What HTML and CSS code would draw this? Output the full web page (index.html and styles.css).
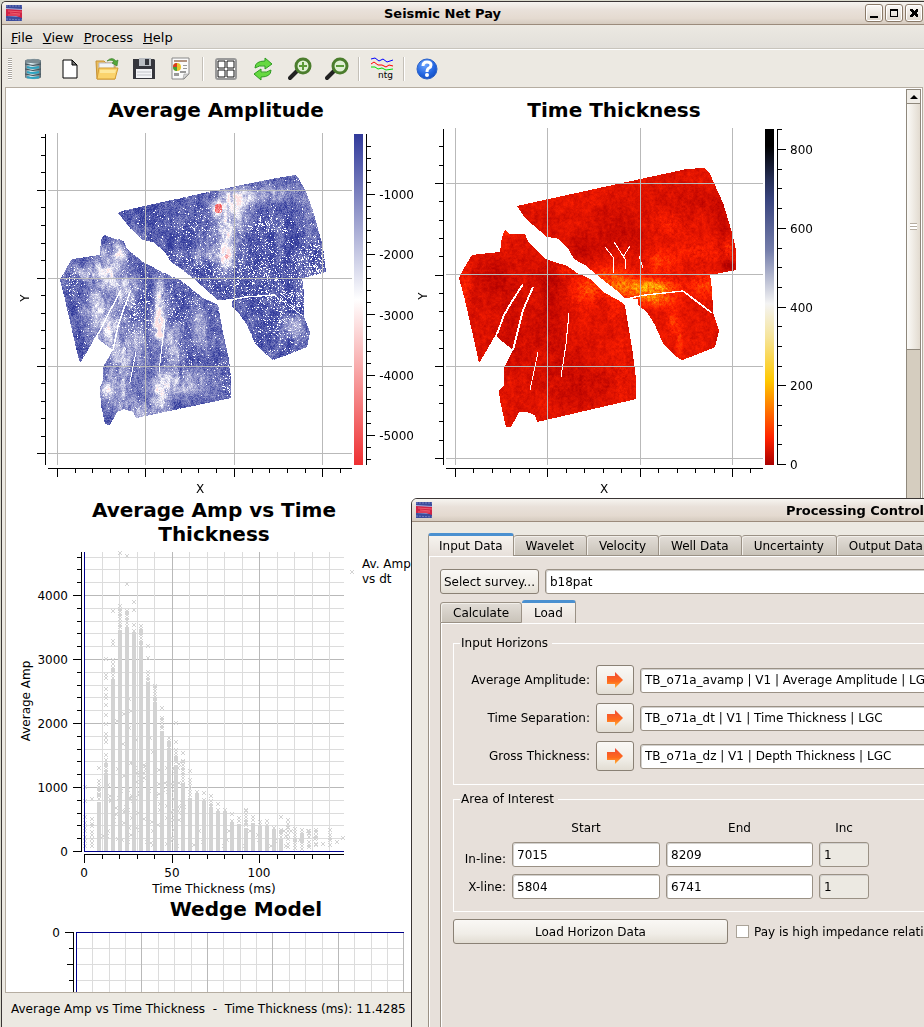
FILE: index.html
```html
<!DOCTYPE html>
<html lang="en">
<head>
<meta charset="utf-8">
<title>Seismic Net Pay</title>
<link rel="stylesheet" href="styles.css">
</head>
<body>
<svg class="defs" aria-hidden="true">
  <defs>
    <symbol id="logo" viewBox="0 0 16 16">
      <rect width="16" height="16" fill="#3b4c9c"/>
      <path d="M0 3l16 1v8L0 11z" fill="#a9aede"/>
      <path d="M0 4l16 1v8l-6-2-10 0z" fill="#cf2345"/>
      <path d="M2 6l14 1M4 8l10 1M2 10l12 0" stroke="#ee5d6c" fill="none"/>
      <path d="M0 1h16M0 14l16 1" stroke="#7480c0" stroke-dasharray="2 1" fill="none"/>
    </symbol>
    <symbol id="arrow" viewBox="0 0 18 18">
      <linearGradient id="og" x1="0" y1="0" x2="0" y2="1"><stop offset="0" stop-color="#ef4a35"/><stop offset=".6" stop-color="#ff6a1c"/><stop offset="1" stop-color="#ffb43a"/></linearGradient>
      <path d="M1 5h8V1l8 8-8 8v-4H1z" fill="url(#og)"/>
    </symbol>
  </defs>
</svg>
<main class="window">
  <header class="titlebar">
    <svg class="logo" aria-hidden="true"><use href="#logo"/></svg>
    <h1>Seismic Net Pay</h1>
    <div class="controls">
      <button aria-label="Minimize"><svg viewBox="0 0 16 16"><path d="M4 11h8v2H4z"/></svg></button>
      <button aria-label="Maximize"><svg viewBox="0 0 16 16"><path d="M4 4h8v8H4zM5 6v5h6V6z" fill-rule="evenodd"/></svg></button>
      <button aria-label="Close"><svg viewBox="0 0 16 16"><path d="M4 4h2l2 2 2-2h2v2l-2 2 2 2v2h-2l-2-2-2 2H4v-2l2-2-2-2z"/></svg></button>
    </div>
  </header>
  <nav class="menubar">
    <button><u>F</u>ile</button><button><u>V</u>iew</button><button><u>P</u>rocess</button><button><u>H</u>elp</button>
  </nav>
  <div class="toolbar">
    <span class="handle"></span>
    <button aria-label="Database"><svg viewBox="0 0 24 24">
      <linearGradient id="db" x1="0" x2="1"><stop offset="0" stop-color="#5d6d75"/><stop offset=".35" stop-color="#e2f3f8"/><stop offset="1" stop-color="#56666e"/></linearGradient>
      <path d="M4 4c0-3 16-3 16 0v16c0 3-16 3-16 0z" fill="url(#db)"/><ellipse cx="12" cy="4" rx="8" ry="2" fill="#7b8b92"/>
      <path d="M4 7q8 3 16 0M4 12q8 3 16 0M4 17q8 3 16 0" fill="none" stroke="#43525a"/><path d="M6 10q6 2 12 0M6 15q6 2 12 0M6 20q6 2 12 0" fill="none" stroke="#2fa3c0" stroke-width="2"/></svg></button>
    <button aria-label="New"><svg viewBox="0 0 24 24"><path d="M5 3h9l5 5v13H5z" fill="#fff" stroke="#000"/><path d="M14 3v5h5z" fill="#777" stroke="#000"/></svg></button>
    <button aria-label="Open"><svg viewBox="0 0 24 24">
      <path d="M1 4h8l2 2h9v16H2z" fill="#e8bd5d" stroke="#c79234"/><path d="M4 6h15v9H4z" fill="#f2f5f5" stroke="#bbc"/><path d="M4 11h19l-3 11H2z" fill="#fad36c" stroke="#d49c32"/><path d="M5 13h16l-1 3H5z" fill="#fde79b"/>
      <path d="M12 4q5-5 9 0l2-1-1 6-5-3 2-1q-2-3-7-1z" fill="#54a83a" stroke="#347a25" stroke-width=".6"/></svg></button>
    <button aria-label="Save"><svg viewBox="0 0 24 24"><path d="M1 2h21l1 1v19H1z" fill="#35363c"/><path d="M7 1h12v8H7z" fill="#b9bdc2"/><path d="M13 2h4v6h-4z" fill="#33353b"/><path d="M4 12h16v9H4z" fill="#f3f4f6"/><path d="M5 15h14M5 18h14" stroke="#c3c5ca"/></svg></button>
    <button aria-label="Report"><svg viewBox="0 0 24 24"><path d="M3 1h17v16l-5 5H3z" fill="#fafafa" stroke="#888"/><path d="M20 17l-6 5 1-5z" fill="#d5d5d5" stroke="#888" stroke-width=".5"/><path d="M5 4h13" stroke="#b29380" stroke-width="2"/><circle cx="8" cy="10" r="4" fill="#e8c42c"/><path d="M8 10V6a4 4 0 0 0-4 4z" fill="#d73a20"/><path d="M8 10H4a4 4 0 0 0 4 4z" fill="#43a035"/><path d="M14 8h4v1h-4zM14 11h4v1h-4zM5 16h5v3H5zM11 14h6v2h-6z" fill="#999"/></svg></button>
    <span class="sep"></span>
    <button aria-label="Tile windows"><svg viewBox="0 0 24 24"><rect x="2" y="2" width="20" height="20" rx="2" fill="#fff" stroke="#999" stroke-width="2"/><path d="M4 4h7v7H4zM13 4h7v7h-7zM4 13h7v7H4zM13 13h7v7h-7z" fill="#fff" stroke="#111"/></svg></button>
    <button aria-label="Refresh"><svg viewBox="0 0 24 24"><g fill="#66d940" stroke="#2f9a22"><path d="M4 11q0-7 10-7V1l7 6-7 5V9q-6-1-10 2z"/><path d="M20 13q0 7-10 7v3l-7-6 7-5v3q6 1 10-2z"/></g></svg></button>
    <button aria-label="Zoom in"><svg viewBox="0 0 24 24"><path d="M10 13l-8 8" stroke="#222" stroke-width="4" stroke-linecap="round"/><circle cx="15" cy="9" r="7" fill="#dff0d4" stroke="#4b7d2d" stroke-width="3"/><path d="M11 9h8M15 5v8" stroke="#5b9b38" stroke-width="2"/></svg></button>
    <button aria-label="Zoom out"><svg viewBox="0 0 24 24"><path d="M10 13l-8 8" stroke="#222" stroke-width="4" stroke-linecap="round"/><circle cx="15" cy="9" r="7" fill="#dff0d4" stroke="#4b7d2d" stroke-width="3"/><path d="M11 9h8" stroke="#5b9b38" stroke-width="2"/></svg></button>
    <span class="sep"></span>
    <button aria-label="Net to gross"><svg viewBox="0 0 24 24"><g fill="none"><path d="M1 2l4-1 4 3 4-2 4 3 6-2" stroke="#00f"/><path d="M1 7l3-2 4 3 4 0 4 2 3-2 4 1" stroke="#f00"/><path d="M1 10l4 0 3 2 4-1 4 2 7-1" stroke="#0d0"/></g><text x="8" y="21" class="ntg">ntg</text></svg></button>
    <span class="sep"></span>
    <button aria-label="Help"><svg viewBox="0 0 24 24"><radialGradient id="hg" cx=".4" cy=".3" r=".8"><stop offset="0" stop-color="#6fa6ff"/><stop offset=".6" stop-color="#2265e0"/><stop offset="1" stop-color="#1147b5"/></radialGradient><circle cx="12" cy="12" r="10" fill="url(#hg)" stroke="#2a62c9"/><path d="M8 9q0-4 4-4t4 3q0 2-2 3t-2 4" fill="none" stroke="#fff" stroke-width="3"/><circle cx="12" cy="18" r="2" fill="#fff"/></svg></button>
  </div>
  <section class="workspace">
    <div class="plots">
      <figure class="plot amp"><h2>Average Amplitude</h2>
        <div class="chart"><canvas id="ampMap" width="411" height="376"></canvas>
        <svg id="amp" width="411" height="376" viewBox="6 122 411 376">
          <defs><linearGradient id="ampScale" x1="0" y1="0" x2="0" y2="1"><stop offset="0" stop-color="#313a9b"/><stop offset=".5" stop-color="#fff"/><stop offset="1" stop-color="#ee3032"/></linearGradient></defs>
          <rect x="354" y="134" width="9" height="331" fill="url(#ampScale)"/>
          <text x="414" y="199" class="end">-1000</text><text x="414" y="259" class="end">-2000</text><text x="414" y="320" class="end">-3000</text><text x="414" y="380" class="end">-4000</text><text x="414" y="440" class="end">-5000</text>
          <text x="200" y="493" class="mid">X</text><text transform="translate(29 298) rotate(-90)" class="mid">Y</text>
        </svg></div></figure>
      <figure class="plot dt"><h2>Time Thickness</h2>
        <div class="chart"><canvas id="dtMap" width="400" height="376"></canvas>
        <svg id="dt" width="400" height="376" viewBox="417 122 400 376">
          <defs><linearGradient id="dtBar" x1="0" y1="0" x2="0" y2="1"><stop offset="0" stop-color="#000"/><stop offset=".05" stop-color="#000"/><stop offset=".15" stop-color="#262f55"/><stop offset=".21" stop-color="#39447e"/><stop offset=".36" stop-color="#747daa"/><stop offset=".52" stop-color="#f4f4f4"/><stop offset=".62" stop-color="#f6e49a"/><stop offset=".75" stop-color="#ffc800"/><stop offset=".92" stop-color="#ff2200"/><stop offset="1" stop-color="#a80000"/></linearGradient></defs>
          <rect x="765" y="129" width="9" height="336" fill="url(#dtBar)"/>
          <text x="790" y="154">800</text><text x="790" y="233">600</text><text x="790" y="312">400</text><text x="790" y="390">200</text><text x="790" y="469">0</text>
          <text x="604" y="493" class="mid">X</text><text transform="translate(427 296) rotate(-90)" class="mid">Y</text>
        </svg></div></figure>
      <figure class="plot cross"><h2>Average Amp vs Time Thickness</h2>
        <div class="chart"><svg id="cross" width="411" height="351" viewBox="6 546 411 351">
          <text x="68" y="600" class="end">4000</text><text x="68" y="664" class="end">3000</text><text x="68" y="728" class="end">2000</text><text x="68" y="792" class="end">1000</text><text x="68" y="856" class="end">0</text>
          <text x="84" y="877" class="mid">0</text><text x="172" y="877" class="mid">50</text><text x="259" y="877" class="mid">100</text>
          <text x="214" y="893" class="mid">Time Thickness (ms)</text><text transform="translate(30 701) rotate(-90)" class="mid">Average Amp</text>
          <text x="362" y="568">Av. Amp.</text><text x="362" y="583">vs dt</text>
        </svg></div></figure>
      <figure class="plot wedge"><h2>Wedge Model</h2>
        <div class="chart"><svg id="wedge" width="411" height="90" viewBox="6 921 411 90">
          <text x="60" y="937" class="end">0</text>
        </svg></div></figure>
    </div>
    <div class="scrollbar"><button aria-label="Scroll up"></button><div class="thumb"></div></div>
  </section>
  <footer class="status">Average Amp vs Time Thickness&nbsp; -&nbsp; Time Thickness (ms): 11.4285</footer>
</main>

<section class="dialog" role="dialog" aria-labelledby="dialogTitle">
  <header class="titlebar">
    <svg class="logo" aria-hidden="true"><use href="#logo"/></svg>
    <h1 id="dialogTitle">Processing Control</h1>
  </header>
  <form class="dialog-body">
    <div class="tabs" role="tablist">
      <button type="button" role="tab" class="tab active" aria-selected="true">Input Data</button><button type="button" role="tab" class="tab">Wavelet</button><button type="button" role="tab" class="tab">Velocity</button><button type="button" role="tab" class="tab">Well Data</button><button type="button" role="tab" class="tab">Uncertainty</button><button type="button" role="tab" class="tab">Output Data</button>
    </div>
    <div class="page">
      <div class="survey"><button type="button" class="btn">Select survey...</button><input type="text" value="b18pat" aria-label="Survey"></div>
      <div class="tabs" role="tablist">
        <button type="button" role="tab" class="tab">Calculate</button><button type="button" role="tab" class="tab active" aria-selected="true">Load</button>
      </div>
      <div class="page inner">
        <fieldset><legend>Input Horizons</legend>
          <div class="horizons">
            <label for="h1">Average Amplitude:</label><button type="button" class="btn" aria-label="Choose average amplitude"><svg><use href="#arrow"/></svg></button><input id="h1" type="text" value="TB_o71a_avamp | V1 | Average Amplitude | LGC">
            <label for="h2">Time Separation:</label><button type="button" class="btn" aria-label="Choose time separation"><svg><use href="#arrow"/></svg></button><input id="h2" type="text" value="TB_o71a_dt | V1 | Time Thickness | LGC">
            <label for="h3">Gross Thickness:</label><button type="button" class="btn" aria-label="Choose gross thickness"><svg><use href="#arrow"/></svg></button><input id="h3" type="text" value="TB_o71a_dz | V1 | Depth Thickness | LGC">
          </div>
        </fieldset>
        <fieldset><legend>Area of Interest</legend>
          <div class="area">
            <span></span><span class="head">Start</span><span class="head">End</span><span class="head">Inc</span>
            <label for="il" class="low">In-line:</label><input id="il" type="text" value="7015"><input type="text" value="8209" aria-label="In-line end"><input type="text" value="1" disabled aria-label="In-line increment">
            <label for="xl">X-line:</label><input id="xl" type="text" value="5804"><input type="text" value="6741" aria-label="X-line end"><input type="text" value="1" disabled aria-label="X-line increment">
          </div>
        </fieldset>
        <div class="actions"><button type="button" class="btn">Load Horizon Data</button><label><input type="checkbox">Pay is high impedance relative</label></div>
      </div>
    </div>
  </form>
</section>
<script src="plots.js"></script>
</body>
</html>
```
FILE: styles.css
```css
* { box-sizing: border-box; }
body { margin: 0; height: 100vh; overflow: hidden; position: relative; background: #d9d9cc; color: #000; font: 12px/16px "DejaVu Sans", sans-serif; }
button, input { font: inherit; color: inherit; margin: 0; }
button { padding: 0; }
.defs { position: absolute; width: 0; height: 0; }

.window { height: 100vh; margin-top: 1px; border: 1px solid #3a3534; border-right: 0; border-radius: 5px 0 0 0; margin-left: 1px; background: #ece9e2; display: flex; flex-direction: column; overflow: hidden; }
.titlebar { flex: none; height: 23px; display: flex; align-items: center; padding: 0 1px 0 4px; background: linear-gradient(#f6f4f0, #e9e1da 35%, #e4dad0 75%, #d5cbbf); border-bottom: 1px solid #9b8b7b; }
.titlebar h1 { flex: 1; margin: 0; padding: 2px 2px 0 0; text-align: center; font-size: 13px; line-height: 16px; font-weight: bold; }
.logo { width: 16px; height: 16px; }
.controls { display: flex; gap: 2px; }
.controls button { width: 18px; height: 18px; border: 1px solid #8a7a68; border-radius: 3px; background: linear-gradient(#fbf9f6, #ddd5cb); box-shadow: inset 0 0 0 1px #fff; }
.controls svg { display: block; width: 16px; height: 16px; shape-rendering: crispEdges; }

.menubar { flex: none; height: 24px; padding: 2px 0 0 9px; display: flex; align-items: center; gap: 10px; font-size: 13px; background: linear-gradient(#ece9e2, #e2dfda); border-bottom: 1px solid #c8c4bc; }
.menubar button { border: 0; background: none; }
.toolbar { flex: none; height: 38px; display: flex; align-items: center; padding-left: 6px; border-top: 1px solid #fff; }
.toolbar button { width: 37px; height: 32px; border: 0; background: none; display: flex; align-items: center; justify-content: center; }
.toolbar svg { width: 24px; height: 24px; }
.handle { width: 4px; height: 22px; margin-right: 2px; background: repeating-linear-gradient(#aaa69e 0 1px, #fff 1px 2px); }
.sep { width: 2px; height: 24px; margin: 0 3px; border-left: 1px solid #c4c0b8; border-right: 1px solid #fff; }
.ntg { font: 9px "DejaVu Sans", sans-serif; }

.workspace { flex: 1; min-height: 0; display: flex; margin: 0 1px 0 3px; border: 1px solid #b5ada1; background: #fff; overflow: hidden; }
.plots { flex: 1; min-width: 0; padding-top: 10px; overflow: hidden; display: grid; grid-template-columns: 411px 400px; align-content: start; }
.plot { margin: 0; min-width: 0; }
.plot h2 { margin: 0; font-size: 20px; line-height: 24px; font-weight: bold; text-align: center; }
.amp h2 { padding-left: 9px; }
.dt h2 { padding-right: 6px; }
.cross h2 { padding: 0 40px 0 45px; }
.wedge { grid-column: 1; }
.wedge h2 { padding-left: 69px; }
.chart { position: relative; }
.chart canvas { position: absolute; left: 0; top: 0; }
.chart svg { position: relative; display: block; shape-rendering: crispEdges; }
.chart .end { text-anchor: end; }
.chart .mid { text-anchor: middle; }
.scrollbar { width: 15px; margin: 1px 1px 0 0; background: #d5cdbf; border: solid #8f887c; border-width: 0 1px; display: flex; flex-direction: column; }
.scrollbar button { height: 15px; border: 1px solid #8f887c; border-width: 1px 0; background: #f0ede7; display: flex; align-items: center; justify-content: center; }
.scrollbar button::before { content: ""; border: 4px solid transparent; border-top: 0; border-bottom: 4px solid #000; }
.scrollbar .thumb { height: 246px; border-bottom: 1px solid #8f887c; background: linear-gradient(90deg, #fbfaf7, #e2dbd0); display: flex; align-items: center; justify-content: center; }
.scrollbar .thumb::before { content: ""; width: 7px; height: 7px; background: repeating-linear-gradient(#b5ada1 0 1px, #fff 1px 3px); }
.status { flex: none; height: 34px; padding: 8px 0 0 9px; white-space: nowrap; }

.dialog { position: absolute; left: 411px; top: 498px; bottom: -20px; right: -358px; border: 1px solid #3a3534; border-radius: 6px 0 0 0; background: #ece9e2; overflow: hidden; }
.dialog-body { padding: 11px 16px 0; height: 100%; display: flex; flex-direction: column; }
.tabs { display: flex; align-items: flex-end; height: 23px; flex: none; }
.tab { height: 21px; padding: 0 12px; border: 1px solid #9a9185; border-left-width: 0; border-radius: 3px 3px 0 0; background: linear-gradient(#e2ddd7, #c9c3b9); box-shadow: inset 1px 1px 0 #f2efea; white-space: nowrap; }
.tab:first-child { border-left-width: 1px; }
.tab.active { height: 23px; padding: 0 10px; border-top: 3px solid #4a90d0; border-bottom: 0; background: linear-gradient(#f6f3ef, #e7e0da); box-shadow: none; }
.page { flex: 1; border: solid #9a9185; border-width: 0 0 0 1px; background: #e7e0da; box-shadow: inset 1px 1px 0 #fff; padding: 13px 11px 0; }
.page .tabs { margin-top: 6px; }
.page .tabs .active { padding: 0 12px; }
.page .inner { padding: 12px 12px 0; height: 500px; }
.btn { height: 25px; padding: 0 3px; border: 1px solid #8a8175; border-radius: 3px; background: linear-gradient(#faf8f5, #f0ede7 60%, #e2ddd3); }
input[type="text"] { min-width: 0; width: 100%; height: 25px; padding: 0 4px; border: 1px solid #9a9185; border-radius: 3px; background: #fff; box-shadow: inset 1px 1px 0 #d2d0cd; }
input[type="text"]:disabled { background: #ece9e2; color: #000; }
.survey { display: flex; gap: 6px; }
.survey .btn { flex: none; }
fieldset { margin: 0; padding: 0 6px; border: 1px solid #fff; min-width: 0; }
fieldset + fieldset { margin-top: 6px; }
legend { padding: 0 4px 0 1px; line-height: 16px; }
.horizons { display: grid; grid-template-columns: 130px 38px 1fr; gap: 8px 6px; align-items: center; padding: 14px 0 13px; }
.horizons label, .area label { text-align: right; white-space: nowrap; }
.horizons .btn { height: 30px; display: flex; align-items: center; justify-content: center; }
.horizons svg { width: 18px; height: 18px; }
.area { display: grid; grid-template-columns: 46px 148px 147px 50px; column-gap: 6px; row-gap: 7px; align-items: center; padding: 13px 0 12px; }
.area .head { text-align: center; height: 15px; }
.area .low { align-self: end; }
.actions { display: flex; align-items: center; gap: 8px; margin-top: 7px; }
.actions .btn { width: 275px; }
.actions label { display: flex; align-items: center; gap: 5px; white-space: nowrap; }
.actions input { appearance: none; width: 13px; height: 13px; border: 1px solid #aaa398; background: #fff; }
```
FILE: plots.js
```js
const NS = 'http://www.w3.org/2000/svg';
const GRID = '#b9b9b9', FAINT = '#dcdcdc', INK = '#000', AXIS = '#00008b';

let seed = 7;
function rand() { seed = (seed * 1664525 + 1013904223) % 4294967296; return seed / 4294967296; }

function rect(svg, x, y, w, h, fill) {
  const r = document.createElementNS(NS, 'rect');
  for (const [k, v] of Object.entries({ x: Math.round(x), y: Math.round(y), width: w, height: h, fill })) r.setAttribute(k, v);
  svg.append(r);
}

/* Every fifth tick counted from zero is a major tick. */
function ticks(start, step, k0, k1, draw) {
  for (let k = k0; k <= k1; k++) draw(Math.floor(start + k * step), k % 5 === 0);
}

function mapAxes(svg, o) {
  for (const y of o.gy) rect(svg, o.x0, y, o.x1 - o.x0, 1, GRID);
  for (const x of o.gx) rect(svg, x, o.top - 1, 1, 466 - o.top, GRID);
  rect(svg, o.axis, o.top, 1, 465 - o.top, INK);
  ticks(o.gy[0] + 0.4, o.sy, o.firstY, 15, (y, m) => rect(svg, o.axis - (m ? 8 : 4), y, m ? 8 : 4, 1, INK));
  rect(svg, o.x0, 468, o.x1 - o.x0, 1, INK);
  ticks(o.gx[0] + 0.3, o.sx, 0, 16, (x, m) => rect(svg, x, 469, 1, m ? 8 : 4, INK));
  rect(svg, o.bar, o.top, 1, 465 - o.top, INK);
}

const amp = document.getElementById('amp');
mapAxes(amp, { gx: [57, 145, 234, 322], gy: [190, 278, 366, 453], x0: 48, x1: 352, top: 134, axis: 45, sy: 17.57, sx: 17.7, bar: 366, firstY: -3 });
ticks(194.4, 12.05, -4, 22, (y, m) => rect(amp, 367, y, m ? 8 : 4, 1, INK));
const dt = document.getElementById('dt');
mapAxes(dt, { gx: [455, 547, 640, 732], gy: [183, 274, 366, 458], x0: 446, x1: 763, top: 129, axis: 443, sy: 18.35, sx: 18.48, bar: 777, firstY: -2 });
for (let k = 0; k <= 17; k++) rect(dt, 778, Math.round(464 - k * 19.68), k % 4 ? 4 : 8, 1, INK);

/* Smooth value noise */
function noise(salt) {
  const h = (i, j) => { let n = Math.imul(i, 374761393) + Math.imul(j, 668265263) + Math.imul(salt, 974634777); n = Math.imul(n ^ (n >>> 13), 1274126177); return ((n ^ (n >>> 16)) >>> 0) / 4294967296; };
  return (x, y) => {
    const i = Math.floor(x), j = Math.floor(y), u = x - i, v = y - j;
    const a = u * u * (3 - 2 * u), b = v * v * (3 - 2 * v);
    return (h(i, j) * (1 - a) + h(i + 1, j) * a) * (1 - b) + (h(i, j + 1) * (1 - a) + h(i + 1, j + 1) * a) * b;
  };
}

function ramp(stops, t) {
  t = Math.max(0, Math.min(0.999, t));
  for (let i = 1; i < stops.length; i++) if (t <= stops[i][0]) {
    const [p, a] = stops[i - 1], [q, b] = stops[i], f = (t - p) / (q - p);
    return a.map((c, n) => c + (b[n] - c) * f);
  }
  return stops[stops.length - 1][1];
}

function drawMap(id, ox, oy, shapes, faults, pixel) {
  const cv = document.getElementById(id), g = cv.getContext('2d');
  g.translate(-ox, -oy);
  for (const s of shapes) {
    g.beginPath(); s.forEach(p => g.lineTo(p[0], p[1])); g.closePath(); g.fill();
  }
  g.globalCompositeOperation = 'destination-out';
  for (const f of faults) {
    g.lineWidth = f.w || 1.2; g.beginPath(); f.p.forEach(p => g.lineTo(p[0], p[1])); g.stroke();
  }
  const im = g.getImageData(0, 0, cv.width, cv.height), d = im.data;
  for (let y = 0; y < cv.height; y++) for (let x = 0; x < cv.width; x++) {
    const k = (y * cv.width + x) * 4;
    if (d[k + 3] < 110) { d[k + 3] = 0; continue; }
    const c = pixel(x + ox, y + oy);
    d[k] = c[0]; d[k + 1] = c[1]; d[k + 2] = c[2]; d[k + 3] = 255;
  }
  g.putImageData(im, 0, 0);
}

const blob = (x, y, list) => list.reduce((s, [cx, cy, rx, ry, a]) => s + a * Math.exp(-(((x - cx) / rx) ** 2) - ((y - cy) / ry) ** 2), 0);

/* Average amplitude */
const ampShapes = [
  [[118,213],[122,211],[213,191],[247,184],[277,178],[296,175],[299,179],[306,192],[313,211],[323,247],[326,272],[307,277],[302,278],[304,293],[304,317],[310,332],[307,347],[287,355],[273,360],[267,355],[255,343],[247,325],[238,312],[232,306],[232,299],[218,300],[210,293],[193,278],[180,268],[171,262],[165,252],[153,242],[143,240],[130,228],[122,218]],
  [[104,235],[115,239],[123,240],[127,249],[143,262],[160,271],[180,280],[193,290],[203,298],[218,305],[223,333],[229,360],[231,378],[231,398],[136,418],[133,412],[124,409],[117,412],[110,425],[105,424],[101,405],[100,388],[103,380],[103,367],[113,350],[98,339],[98,332],[88,350],[80,363],[77,352],[65,300],[60,280],[70,262],[73,259],[100,255],[101,240]]
];
const ampFaults = [
  { p: [[98,334],[112,307],[121,290]], w: 1.6 }, { p: [[113,350],[118,326],[124,308],[131,290]], w: 1.6 },
  { p: [[165,319],[159,372]] }, { p: [[136,352],[130,382]], w: 1 }, { p: [[232,300],[245,297],[274,295]], w: 1.6 }, { p: [[274,295],[303,316]], w: 1 }
];
const white = [[217,208,6,7,.4],[233,213,13,25,.3],[225,240,7,28,.34],[226,257,8,10,.25],[238,196,14,9,.22],[270,195,30,10,.2],[210,254,20,9,.2],[107,270,12,22,.36],[85,272,16,8,.25],[120,252,8,10,.3],[95,307,11,22,.26],[110,325,12,18,.28],[159,306,6,30,.4],[158,330,9,16,.27],[126,290,9,15,.3],[174,345,8,20,.26],[200,325,8,20,.2],[120,355,12,22,.24],[106,390,6,8,.33],[120,390,12,20,.24],[160,397,8,20,.35],[178,382,28,12,.26],[138,340,7,25,.2],[140,412,8,10,.3],[294,326,14,10,.22],[315,215,9,25,.15]];
const holes = [[260,265,42,26,.13],[268,226,20,8,.22],[200,225,34,16,.08],[315,262,12,20,.23],[280,320,25,30,.11],[215,278,30,12,.12],[192,262,22,10,.08],[170,308,28,20,.11],[135,312,14,28,.1],[188,360,25,12,.07],[74,282,10,15,.12],[226,385,8,16,.13],[290,300,20,10,.17]];
const n1 = noise(1), n2 = noise(2), n3 = noise(3), n4 = noise(4);
drawMap('ampMap', 6, 122, ampShapes, ampFaults, (x, y) => {
  if (rand() < 0.015 + blob(x, y, holes) * (.4 + 1.2 * n4(x / 3, y / 3))) return [255, 255, 255];
  const b = blob(x, y, white);
  let t = 0.06 + (n1(x / 9, y / 17) - .3) * .12 + (n2(x / 3, y / 6) - .5) * .12 + b * (.5 + .9 * n2(x / 3 + 9, y / 5)) + (rand() - .45) * .17;
  t = Math.min(t, b > .3 ? .57 : .5);
  if ((x - 218) ** 2 / 16 + (y - 208) ** 2 / 22 < 1) t = .72 + rand() * .2;
  if ((x - 226) ** 2 + (y - 256) ** 2 < 5) t = .62 + rand() * .12;
  return ramp([[0, [49, 58, 155]], [.5, [255, 253, 255]], [1, [238, 48, 50]]], t);
});

/* Time thickness */
const dtShapes = [
  [[517,206],[627,182],[687,169],[705,168],[710,174],[717,190],[723,203],[732,233],[736,250],[736,270],[720,273],[710,275],[712,290],[713,313],[719,331],[715,347],[693,356],[682,360],[677,357],[663,343],[655,325],[647,312],[638,305],[638,299],[625,298],[620,293],[597,275],[585,265],[574,259],[568,248],[557,238],[547,237],[533,225],[523,215]],
  [[505,230],[510,234],[525,234],[527,240],[545,259],[567,266],[577,273],[590,279],[605,293],[623,303],[625,306],[632,348],[636,380],[636,399],[537,422],[535,415],[527,412],[519,412],[511,427],[506,427],[500,400],[499,390],[504,386],[504,368],[513,350],[497,337],[497,332],[488,348],[479,363],[477,353],[465,300],[459,278],[463,270],[472,255],[500,252],[502,237]]
];
const dtFaults = [
  { p: [[497,334],[504,315],[511,303],[523,284]], w: 2 }, { p: [[513,350],[520,322],[523,310],[533,287]], w: 2 },
  { p: [[569,313],[566,344],[561,377]] }, { p: [[538,352],[530,390]], w: 1.1 },
  { p: [[630,298],[645,295],[683,291]], w: 1.6 }, { p: [[683,291],[712,313]], w: 1.6 },
  { p: [[605,247],[613,257],[614,273]] }, { p: [[614,242],[625,259],[626,269]] }, { p: [[630,246],[623,257]] }, { p: [[639,256],[643,268]], w: 1 }
];
const hot = [[628,287,28,10,.22],[655,287,20,7,.34],[650,297,14,3,.2],[610,277,20,11,.13],[660,262,14,12,.12],[705,285,13,14,.13],[657,301,16,6,.2],[672,320,4,14,.1],[679,340,3,15,.12],[585,292,13,13,.13],[700,252,20,8,.07],[728,248,5,10,.12],[670,224,14,10,.06],[616,306,8,12,.06],[507,232,4,3,.15],[565,270,8,5,.08],[465,288,5,18,.07],[622,370,10,30,.03]];
const cold = [[490,275,22,18,.07],[510,340,25,40,.04],[550,300,14,45,.07],[570,380,35,25,.05],[615,225,25,20,.05],[685,200,30,25,.03],[580,250,28,12,.05],[725,235,8,35,.05],[728,265,8,8,.07]];
drawMap('dtMap', 417, 122, dtShapes, dtFaults, (x, y) => {
  const h = blob(x, y, hot);
  const t = .155 + (n1(x / 20, y / 20) - .5) * .04 + (n3(x / 4, y / 7) - .5) * .05 + (n4(x / 2, y / 2) - .5) * (.06 + h * .6) + h * .9 - blob(x, y, cold) + (rand() - .5) * (.03 + h * .35);
  return ramp([[0, [160, 0, 0]], [.06, [182, 2, 0]], [.22, [255, 32, 0]], [.42, [255, 120, 0]], [.65, [255, 215, 10]], [1, [250, 245, 170]]], t);
});

/* Amplitude against thickness */
const cross = document.getElementById('cross'), GREY = '#d3d3d3';
for (let k = 0; k <= 23; k++) { const y = 851 - k * 12.8; if (k) rect(cross, 85, y, 259, 1, k % 5 ? FAINT : GRID); rect(cross, k % 5 ? 77 : 73, y, k % 5 ? 4 : 8, 1, INK); }
for (let k = 0; k <= 14; k++) { const x = 84 + k * 17.5; if (k) rect(cross, x, 552, 1, 299, k % 5 ? FAINT : GRID); rect(cross, x, 855, 1, k % 5 ? 4 : 8, INK); }
for (let k = 5; k <= 10; k += 5) rect(cross, 84 + k * 17.5, 552, 1, 299, GRID);
let marks = '';
const mark = (x, y) => {
  x = Math.round(x) - 2; y = Math.round(y) - 2;
  marks += `M${x} ${y}h1v1h-1zM${x + 3} ${y}h1v1h-1zM${x + 1} ${y + 1}h2v2h-2zM${x} ${y + 3}h1v1h-1zM${x + 3} ${y + 3}h1v1h-1z`;
};
const columns = [[99,802,784],[106,773,760],[113,679,668],[120,630,606],[127,627,611],[134,632,631],[141,646,626],[148,682,672],[155,702,686],[162,731,718],[169,748,738],[176,765,750],[183,783,762],[190,798,780],[197,793,792],[204,801,800],[211,807,801],[218,811,810],[225,811,810],[232,822,821],[239,824,818],[246,828,811],[253,823,817],[260,826,822],[267,826,825],[274,829,828],[281,839,830],[295,852,829],[302,852,830]];
for (const [x, solid, dense] of columns) {
  if (solid < 851) rect(cross, x - 2, solid, 4, 851 - solid, GREY);
  for (let y = dense; y < Math.min(solid, 850); y += 2 + Math.floor(rand() * 2)) mark(x, y);
}
for (const [x, top, n] of [[85,816,7],[92,818,8],[99,766,6],[246,810,8],[288,818,9],[309,828,7],[316,828,6],[330,828,5],[106,762,9]])
  for (let i = 0; i < n; i++) mark(x, top + (848 - top) * i / n + rand() * 3);
[[120,553],[127,556],[127,584],[134,602],[134,610],[134,625],[113,611],[113,641],[113,644],[106,659],[106,675],[106,678],[106,689],[106,695],[106,698],[106,705],[106,715],[106,724],[106,734],[106,738],[106,742],[106,755],[113,660],[113,664],[148,646],[148,658],[162,708],[176,723],[176,742],[183,753],[183,761],[190,771],[92,799],[85,801],[85,787],[204,793],[211,796],[218,804],[232,814],[246,810],[267,821],[281,817],[323,844],[337,842],[343,838],[129,699],[124,714],[131,711],[117,721],[129,728],[123,744],[153,752],[136,740],[150,738]].forEach(p => mark(...p));
for (let i = 0; i < 110; i++) mark(103 + rand() * 82, 762 + rand() * 86);
for (let i = 0; i < 22; i++) mark(190 + rand() * 130, 830 + rand() * 18);
mark(352, 572);
const mp = document.createElementNS(NS, 'path');
mp.setAttribute('d', marks); mp.setAttribute('fill', GREY); cross.append(mp);
rect(cross, 81, 552, 1, 300, INK);
rect(cross, 84, 854, 260, 1, INK);
rect(cross, 84, 552, 1, 300, AXIS);
rect(cross, 84, 851, 260, 1, AXIS);

/* Wedge model */
const wedge = document.getElementById('wedge');
for (let k = 1; k < 6; k++) rect(wedge, 77, 932 + k * 16, 327, 1, FAINT);
for (let k = 1; k <= 20; k++) rect(wedge, 76 + k * 16.37, 933, 1, 78, k % 4 ? FAINT : GRID);
for (let k = 0; k < 6; k++) rect(wedge, 73 - [8, 4, 6, 4, 6, 4][k], 932 + k * 16, [8, 4, 6, 4, 6, 4][k], 1, INK);
rect(wedge, 73, 932, 1, 79, INK);
rect(wedge, 76, 932, 1, 79, AXIS);
rect(wedge, 76, 932, 328, 1, AXIS);
```
